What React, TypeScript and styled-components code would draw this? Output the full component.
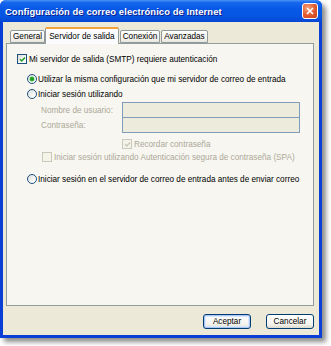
import styled, { createGlobalStyle } from 'styled-components';

const GlobalStyle = createGlobalStyle`
  html, body {
    margin: 0;
    padding: 0;
    background: #ffffff;
  }
  body {
    font-family: 'Liberation Sans', Arial, sans-serif;
  }
`;

const StStage = styled.div`
  width: 331px;
  height: 346px;
  overflow: hidden;
`;

const StWindow = styled.div`
  width: 322px;
  height: 338px;
  display: flex;
  flex-direction: column;
  background: #0a3fd6;
  border-radius: 6px 6px 0 0;
  box-shadow: 4px 4px 5px rgba(0, 0, 0, 0.45);
`;

const StTitleBar = styled.div`
  height: 22px;
  flex: none;
  display: flex;
  align-items: center;
  justify-content: space-between;
  padding: 0 4px 0 5px;
  border-radius: 6px 6px 0 0;
  background: linear-gradient(
    #4a93f5 0%,
    #1566ee 12%,
    #0858e6 40%,
    #0655e3 75%,
    #0546d2 100%
  );
`;

const StTitle = styled.span`
  color: #ffffff;
  font-weight: bold;
  font-size: 9.4px;
  letter-spacing: 0.1px;
  text-shadow: 1px 1px 0 #0a1e8c;
`;

const StClose = styled.div`
  width: 16px;
  height: 16px;
  border: 1px solid #ffffff;
  border-radius: 3px;
  box-sizing: border-box;
  background: radial-gradient(circle at 35% 30%, #f3a27c 0%, #e2592e 55%, #c7411c 100%);
  display: flex;
  align-items: center;
  justify-content: center;
`;

const StClient = styled.div`
  flex: 1;
  margin: 0 3px 3px;
  background: #ece9d8;
  display: flex;
  flex-direction: column;
  padding: 5px 5px 0 3px;
`;

const StTabRow = styled.div`
  height: 16px;
  display: flex;
  align-items: flex-end;
  padding-left: 3px;
  position: relative;
  z-index: 1;
`;

const StTab = styled.div<{ $active?: boolean }>`
  box-sizing: border-box;
  height: ${(p) => (p.$active ? '17px' : '13px')};
  margin-bottom: ${(p) => (p.$active ? '-1px' : '0')};
  margin-left: ${(p) => (p.$active ? '0' : '1px')};
  padding: 0 ${(p) => (p.$active ? '3px' : '2px')};
  border: 1px solid #919b9c;
  border-bottom: ${(p) => (p.$active ? 'none' : '1px solid #919b9c')};
  border-top: ${(p) => (p.$active ? '2px solid #f4a33a' : '1px solid #919b9c')};
  border-radius: 2px 2px 0 0;
  background: ${(p) =>
    p.$active ? '#fcfcfe' : 'linear-gradient(#ffffff, #f0efe8 80%, #e6e4da)'};
  font-size: 8.2px;
  color: #000000;
  display: flex;
  align-items: center;
  white-space: nowrap;
`;

const StPanel = styled.div`
  height: 263px;
  box-sizing: border-box;
  border: 1px solid #919b9c;
  background: #f7f6f0;
  display: flex;
  flex-direction: column;
`;

const StRow = styled.div<{ $indent: number; $top: number; $disabled?: boolean }>`
  height: 12px;
  margin-top: ${(p) => p.$top}px;
  padding-left: ${(p) => p.$indent}px;
  display: flex;
  align-items: center;
  font-size: 8.2px;
  color: ${(p) => (p.$disabled ? '#aca899' : '#000000')};
  white-space: nowrap;
`;

const StCheckBox = styled.span<{ $disabled?: boolean }>`
  box-sizing: border-box;
  width: 10px;
  height: 10px;
  margin-right: 2px;
  border: 1px solid ${(p) => (p.$disabled ? '#cac8bb' : '#1c5180')};
  background: ${(p) =>
    p.$disabled ? '#f5f4ea' : 'linear-gradient(135deg, #dcdcd7, #ffffff 80%)'};
  display: flex;
  align-items: center;
  justify-content: center;
`;

const StRadio = styled.span<{ $checked?: boolean }>`
  box-sizing: border-box;
  width: 10px;
  height: 10px;
  margin-right: 1px;
  border-radius: 50%;
  border: 1px solid #1c5180;
  background: linear-gradient(135deg, #dcdcd7, #ffffff 80%);
  display: flex;
  align-items: center;
  justify-content: center;
  &::after {
    content: '';
    display: ${(p) => (p.$checked ? 'block' : 'none')};
    width: 4px;
    height: 4px;
    border-radius: 50%;
    background: #21a121;
    box-shadow: 0 0 0 0.5px #5ccf5c;
  }
`;

const StFields = styled.div`
  margin-top: 2px;
  display: flex;
  flex-direction: column;
`;

const StFieldRow = styled.div<{ $top: number }>`
  height: 16px;
  margin-top: ${(p) => p.$top}px;
  display: flex;
  align-items: center;
  padding-left: 34px;
`;

const StFieldLabel = styled.span`
  width: 81px;
  font-size: 8.2px;
  color: #aca899;
  white-space: nowrap;
`;

const StInput = styled.div`
  box-sizing: border-box;
  width: 178px;
  height: 16px;
  border: 1px solid #7f9db9;
  background: #ecebdc;
`;

const StFooter = styled.div`
  flex: 1;
  display: flex;
  justify-content: flex-end;
  align-items: flex-start;
  gap: 15px;
  padding-top: 8px;
`;

const StButton = styled.div<{ $default?: boolean }>`
  box-sizing: border-box;
  width: 48px;
  height: 15px;
  border: 1px solid #003c74;
  border-radius: 3px;
  background: linear-gradient(#ffffff, #f4f3ee 70%, #dcd9cd);
  box-shadow: ${(p) =>
    p.$default ? 'inset 0 0 0 1px #a9c6f5, inset 0 0 0 2px #dbe8fb' : 'none'};
  display: flex;
  align-items: center;
  justify-content: center;
  font-size: 8.2px;
  color: #000000;
`;

const Check = ({ color }: { color: string }) => (
  <svg width="7" height="7" viewBox="0 0 7 7">
    <path d="M1 3.2 L2.8 5 L6 1.6" fill="none" stroke={color} strokeWidth="1.5" />
  </svg>
);

const CloseX = () => (
  <svg width="8" height="8" viewBox="0 0 8 8">
    <path d="M1 1 L7 7 M7 1 L1 7" stroke="#ffffff" strokeWidth="1.6" />
  </svg>
);

export default function App() {
  return (
    <StStage>
      <GlobalStyle />
      <StWindow>
        <StTitleBar>
          <StTitle>Configuración de correo electrónico de Internet</StTitle>
          <StClose>
            <CloseX />
          </StClose>
        </StTitleBar>
        <StClient>
          <StTabRow>
            <StTab>General</StTab>
            <StTab $active>Servidor de salida</StTab>
            <StTab>Conexión</StTab>
            <StTab>Avanzadas</StTab>
          </StTabRow>
          <StPanel>
            <StRow $indent={10} $top={9}>
              <StCheckBox>
                <Check color="#21a121" />
              </StCheckBox>
              Mi servidor de salida (SMTP) requiere autenticación
            </StRow>
            <StRow $indent={20} $top={8}>
              <StRadio $checked />
              Utilizar la misma configuración que mi servidor de correo de entrada
            </StRow>
            <StRow $indent={20} $top={3}>
              <StRadio />
              Iniciar sesión utilizando
            </StRow>
            <StFields>
              <StFieldRow $top={0}>
                <StFieldLabel>Nombre de usuario:</StFieldLabel>
                <StInput />
              </StFieldRow>
              <StFieldRow $top={-1}>
                <StFieldLabel>Contraseña:</StFieldLabel>
                <StInput />
              </StFieldRow>
            </StFields>
            <StRow $indent={115} $top={5} $disabled>
              <StCheckBox $disabled>
                <Check color="#cac8bb" />
              </StCheckBox>
              Recordar contraseña
            </StRow>
            <StRow $indent={35} $top={1} $disabled>
              <StCheckBox $disabled />
              Iniciar sesión utilizando Autenticación segura de contraseña (SPA)
            </StRow>
            <StRow $indent={20} $top={10}>
              <StRadio />
              Iniciar sesión en el servidor de correo de entrada antes de enviar correo
            </StRow>
          </StPanel>
          <StFooter>
            <StButton $default>Aceptar</StButton>
            <StButton>Cancelar</StButton>
          </StFooter>
        </StClient>
      </StWindow>
    </StStage>
  );
}
